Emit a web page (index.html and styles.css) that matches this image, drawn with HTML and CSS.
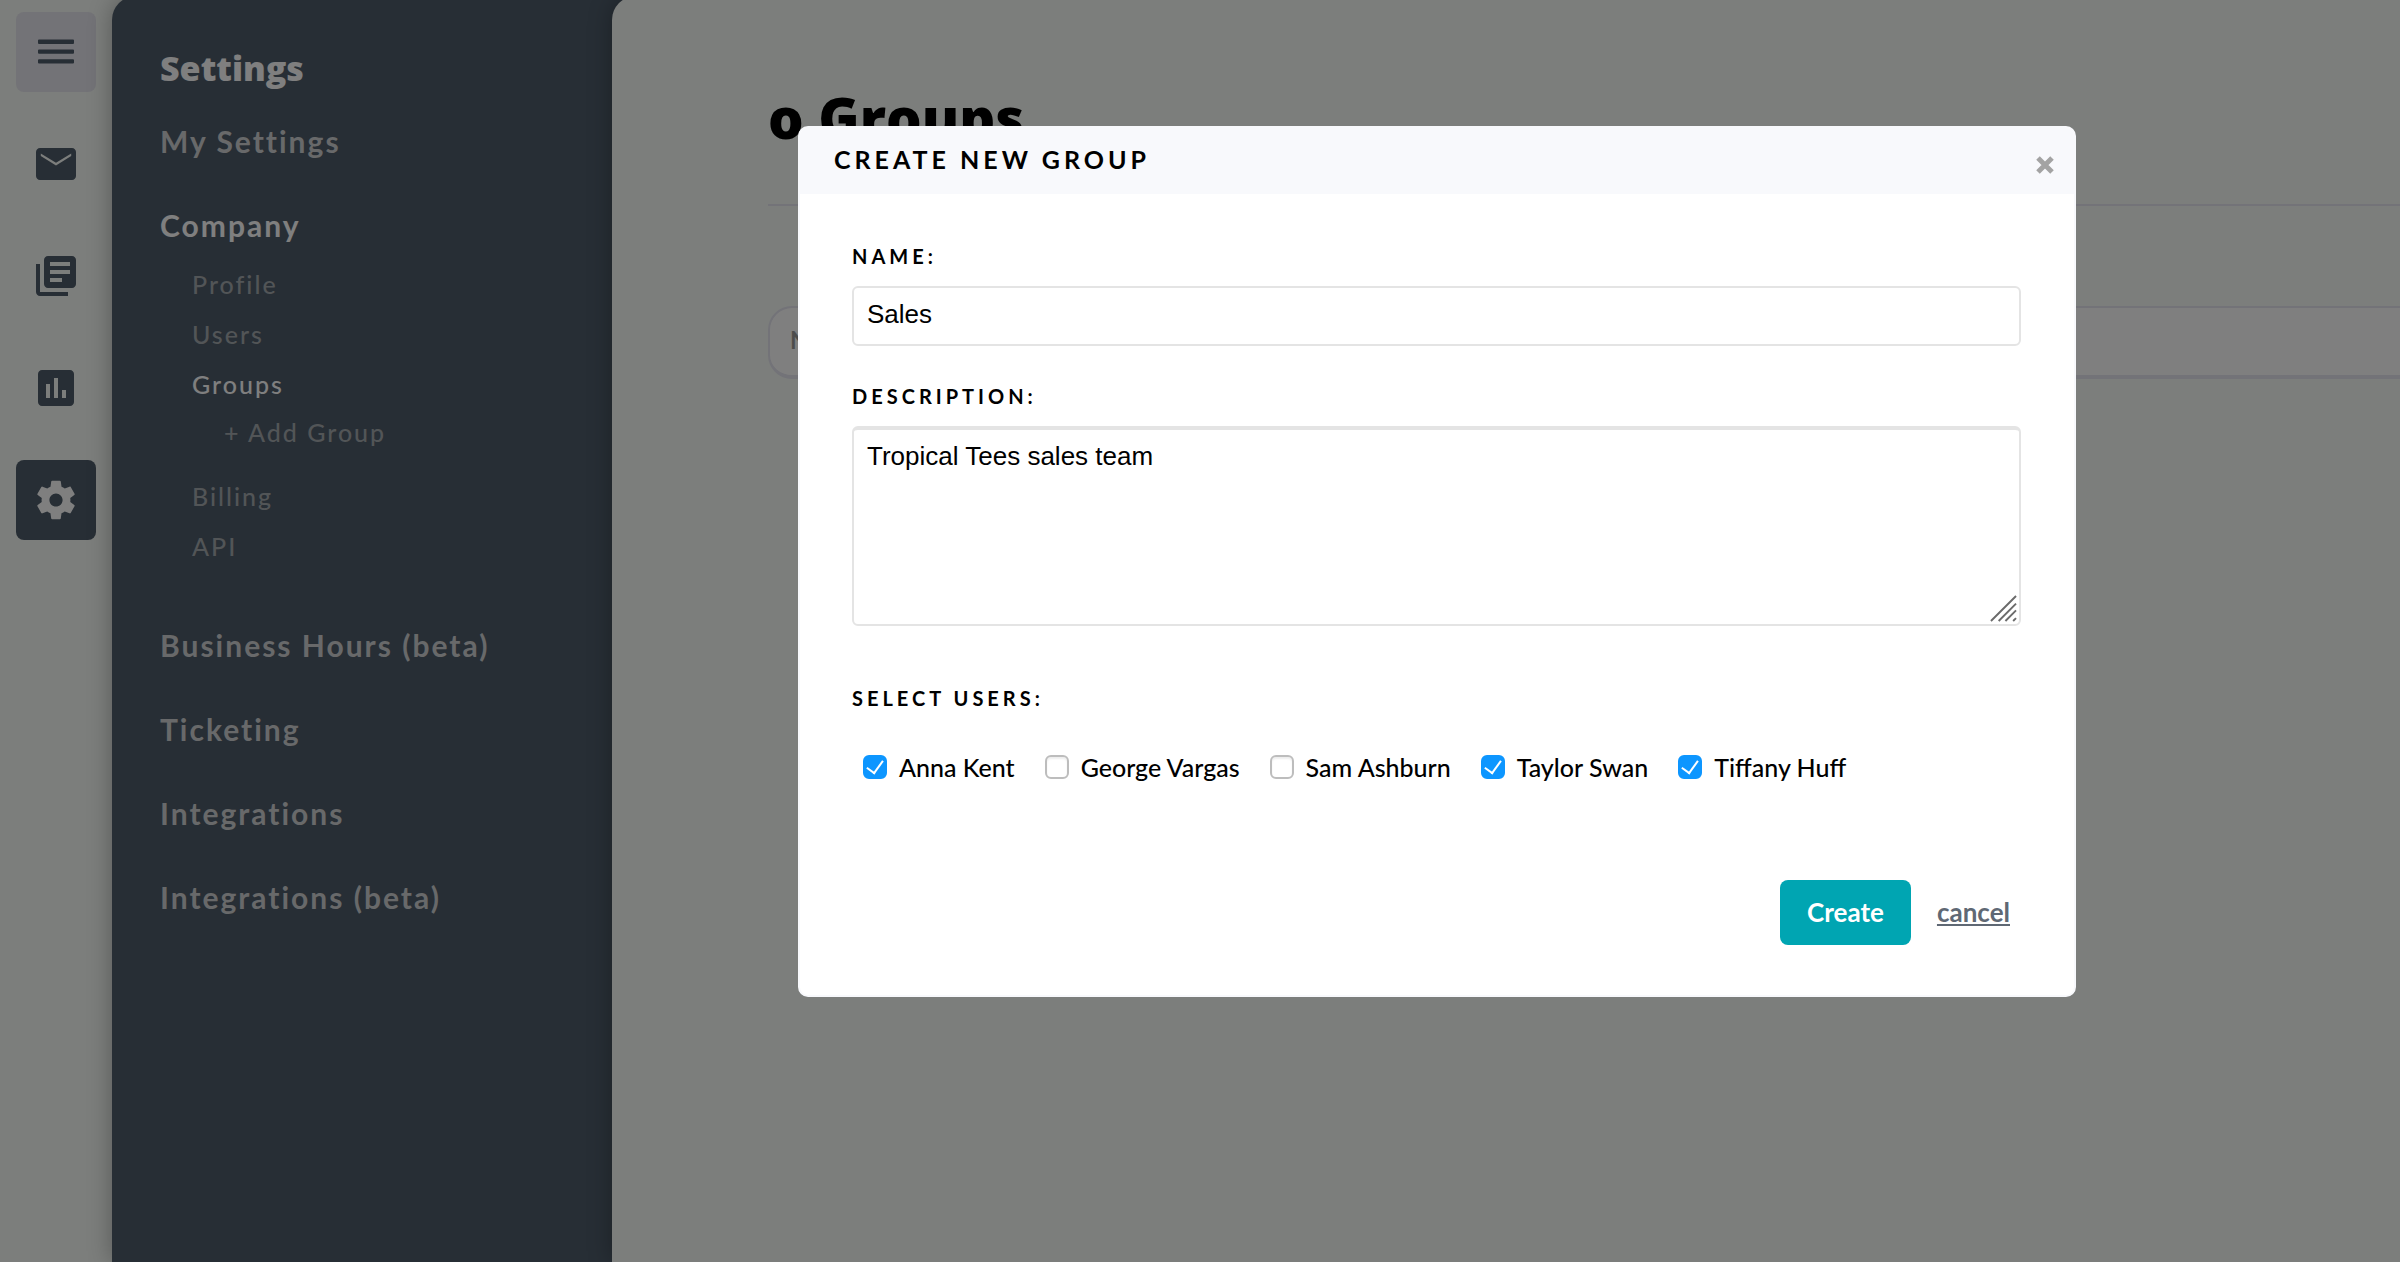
FILE: index.html
```html
<!DOCTYPE html>
<html lang="en">
<head>
    <meta charset="UTF-8">
    <meta name="viewport" content="width=device-width, initial-scale=1.0">
    <title>Groups - Settings</title>
    <link rel="stylesheet" href="styles.css">
</head>
<body>
    <div class="app">
        <div class="rail">
            <button class="rail-button menu" aria-label="Menu">
                <svg viewBox="0 0 24 24"><path d="M3.500 5.800h17q.5 0 .5.500v1.200q0 .5-.5.500h-17q-.5 0-.5-.5v-1.200q0-.5.5-.5zM3.500 10.700h17q.5 0 .5.500v1.200q0 .5-.5.500h-17q-.5 0-.5-.5v-1.200q0-.5.5-.5zM3.500 15.600h17q.5 0 .5.500v1.200q0 .5-.5.500h-17q-.5 0-.5-.5v-1.200q0-.5.5-.5z"/></svg>
            </button>
            <button class="rail-button" aria-label="Mail">
                <svg viewBox="0 0 24 24"><path d="M20 4H4c-1.100 0-2 .9-2 2v12c0 1.100.9 2 2 2h16c1.100 0 2-.9 2-2V6c0-1.100-.9-2-2-2zm-.4 4L12 12.700 4.400 8V6.700L12 11.400l7.600-4.700z"/></svg>
            </button>
            <button class="rail-button" aria-label="Library">
                <svg viewBox="0 0 24 24"><path d="M4 6H2v14c0 1.100.9 2 2 2h14v-2H4V6zm16-4H8c-1.100 0-2 .9-2 2v12c0 1.100.9 2 2 2h12c1.100 0 2-.9 2-2V4c0-1.100-.9-2-2-2zm-1 9H9V9h10v2zm-4 4H9v-2h6v2zm4-8H9V5h10v2z"/></svg>
            </button>
            <button class="rail-button" aria-label="Reports">
                <svg viewBox="0 0 24 24"><path d="M19 3H5c-1.100 0-2 .9-2 2v14c0 1.100.9 2 2 2h14c1.100 0 2-.9 2-2V5c0-1.100-.9-2-2-2zM9 17H7v-7h2v7zm4 0h-2V7h2v10zm4 0h-2v-4h2v4z"/></svg>
            </button>
            <button class="rail-button active" aria-label="Settings">
                <svg viewBox="0 0 24 24"><path d="M19.140 12.940c.04-.3.060-.61.060-.94 0-.32-.02-.64-.07-.94l2.030-1.580c.18-.14.230-.41.120-.61l-1.920-3.320c-.12-.22-.37-.29-.59-.22l-2.390.960c-.5-.38-1.030-.7-1.620-.94l-.36-2.540c-.04-.24-.24-.41-.48-.41h-3.840c-.24 0-.43.170-.47.410l-.36 2.540c-.59.240-1.130.570-1.620.940l-2.390-.96c-.22-.08-.47 0-.59.220L2.740 8.870c-.12.210-.08.470.120.610l2.030 1.580c-.05.300-.09.630-.09.940s.02.640.070.940l-2.030 1.580c-.18.140-.23.410-.12.610l1.920 3.320c.12.220.370.290.590.220l2.390-.96c.5.380 1.030.700 1.620.940l.36 2.540c.05.240.240.410.480.410h3.840c.24 0 .44-.17.470-.41l.36-2.540c.59-.24 1.130-.56 1.620-.94l2.390.960c.22.080.470 0 .59-.22l1.920-3.320c.12-.22.070-.47-.12-.61l-2.010-1.580zM12 15.300c-1.820 0-3.300-1.480-3.300-3.300s1.480-3.300 3.300-3.300 3.300 1.480 3.300 3.300-1.480 3.300-3.300 3.300z"/></svg>
            </button>
        </div>

        <nav class="sidebar">
            <h2>Settings</h2>
            <ul class="sections">
                <li><a href="#">My Settings</a></li>
                <li>
                    <a href="#" class="current">Company</a>
                    <ul class="pages">
                        <li><a href="#">Profile</a></li>
                        <li><a href="#">Users</a></li>
                        <li>
                            <a href="#" class="current">Groups</a>
                            <a href="#" class="add">+ Add Group</a>
                        </li>
                        <li><a href="#">Billing</a></li>
                        <li><a href="#">API</a></li>
                    </ul>
                </li>
                <li><a href="#">Business Hours (beta)</a></li>
                <li><a href="#">Ticketing</a></li>
                <li><a href="#">Integrations</a></li>
                <li><a href="#">Integrations (beta)</a></li>
            </ul>
        </nav>

        <main class="content">
            <h1>o Groups</h1>
            <table class="groups">
                <tr><th>Name</th></tr>
            </table>
        </main>
    </div>

    <div class="overlay">
        <form class="modal" role="dialog" aria-labelledby="modal-title">
            <div class="modal-header">
                <h3 id="modal-title">Create new group</h3>
                <button type="button" class="close" aria-label="Close">
                    <svg viewBox="0 0 18 18"><path d="M2 2l14 14M16 2L2 16"/></svg>
                </button>
            </div>
            <div class="modal-body">
                <label class="caption" for="name">Name:</label>
                <input type="text" id="name" class="field" value="Sales">

                <label class="caption" for="description">Description:</label>
                <div class="textarea-wrap">
                    <textarea id="description" class="field">Tropical Tees sales team</textarea>
                    <svg class="grip" viewBox="0 0 28 28"><path d="M1 27L27 1M9 27L27 9M16 27L27 16M24 27l3-3"/></svg>
                </div>

                <fieldset>
                    <legend class="caption">Select users:</legend>
                    <div class="users">
                        <label><input type="checkbox" checked>Anna Kent</label>
                        <label><input type="checkbox">George Vargas</label>
                        <label><input type="checkbox">Sam Ashburn</label>
                        <label><input type="checkbox" checked>Taylor Swan</label>
                        <label><input type="checkbox" checked>Tiffany Huff</label>
                    </div>
                </fieldset>

                <div class="actions">
                    <button type="submit" class="create">Create</button>
                    <a href="#" class="cancel">cancel</a>
                </div>
            </div>
        </form>
    </div>
</body>
</html>
```

FILE: styles.css
```css
* {
    box-sizing: border-box;
}

body {
    margin: 0;
    font-family: Lato, sans-serif;
    font-size: 24px;
    color: #000;
    background: #f8fcf8;
}

h1, h2, h3, ul, fieldset, legend {
    margin: 0;
    padding: 0;
}

ul {
    list-style: none;
}

a {
    color: inherit;
    text-decoration: none;
}

button {
    border: none;
    cursor: pointer;
    font-family: inherit;
}

.app {
    display: flex;
    min-height: 100vh;
    overflow: hidden;
}

/* icon rail */
.rail {
    display: flex;
    flex-direction: column;
    gap: 32px;
    width: 112px;
    padding: 12px 16px;
}

.rail-button {
    width: 80px;
    height: 80px;
    padding: 16px;
    border-radius: 8px;
    background: none;
}

.rail-button svg {
    display: block;
    width: 48px;
    height: 48px;
    fill: #4e5c6a;
}

.rail-button.menu {
    background: #e6e6ee;
}

.rail-button.active {
    background: #4e5c6a;
}

.rail-button.active svg {
    fill: #fff;
}

/* settings navigation */
.sidebar {
    width: 524px;
    margin-top: -4px;
    margin-right: -24px;
    padding: 50px 24px 48px 48px;
    border-radius: 24px 0 0 0;
    background: #4e5c6a;
    box-shadow: 0 0 24px rgba(0, 0, 0, 0.3);
    color: #fff;
}

.sidebar h2 {
    margin-bottom: 33px;
    font-family: "Open Sans", sans-serif;
    font-size: 34px;
    font-weight: 800;
    line-height: 44px;
}

.sections > li {
    margin-bottom: 48px;
}

.sections > li > a {
    display: block;
    font-size: 30px;
    font-weight: 700;
    line-height: 36px;
    letter-spacing: 2px;
    color: #d0d2d4;
}

.pages {
    padding: 16px 0 8px 32px;
}

.pages a {
    display: block;
    font-size: 25px;
    font-weight: 500;
    line-height: 50px;
    letter-spacing: 2px;
    color: #a4aaae;
}

.pages .add {
    padding: 0 0 16px 32px;
    line-height: 46px;
}

.sections a.current {
    color: #fff;
}

/* page */
.content {
    flex: 1;
    z-index: 1;
    margin-top: -4px;
    padding: 81px 0 0 156px;
    border-radius: 24px 0 0 0;
    background: #f8fcf8;
    box-shadow: 0 0 24px rgba(0, 0, 0, 0.3);
}

.content h1 {
    margin-bottom: 100px;
    padding-bottom: 47px;
    border-bottom: 2px solid #e6e6f0;
    font-family: "Open Sans", sans-serif;
    font-size: 56px;
    font-weight: 800;
    line-height: 80px;
}

.groups {
    width: calc(100% + 24px);
    border: 2px solid #e6e6f0;
    border-bottom-width: 4px;
    border-radius: 24px;
    border-spacing: 0;
    background: #fff;
}

.groups th {
    height: 67px;
    padding: 0 20px 4px;
    font-size: 24px;
    color: #999;
    text-align: left;
}

/* modal */
.overlay {
    position: fixed;
    inset: 0;
    z-index: 2;
    padding: 126px 13.5% 0 33.25%;
    background: rgba(0, 0, 0, 0.5);
}

.modal {
    overflow: hidden;
    border: 2px solid #f8f9fc;
    border-radius: 10px;
    background: #fff;
}

.modal-header {
    display: flex;
    justify-content: space-between;
    padding: 12px 20px 16px 34px;
    background: #f8f9fc;
}

.modal-header h3 {
    font-size: 25px;
    font-weight: 700;
    line-height: 38px;
    letter-spacing: 4px;
    text-transform: uppercase;
}

.close {
    align-self: flex-end;
    padding: 4px 0;
    background: none;
}

.close svg {
    display: block;
    width: 18px;
    height: 18px;
    overflow: visible;
    fill: none;
    stroke: #a3a3a3;
    stroke-width: 5;
}

.modal-body {
    padding: 48px 53px 50px 52px;
}

.caption {
    display: block;
    font-size: 20px;
    font-weight: 700;
    line-height: 28px;
    letter-spacing: 4px;
    text-transform: uppercase;
}

.field {
    display: block;
    width: 100%;
    height: 60px;
    margin: 16px 0 36px;
    padding: 8px 13px 12px;
    border: 2px solid #e4e4e4;
    border-radius: 6px;
    outline: none;
    font-family: "Liberation Sans", Arial, sans-serif;
    font-size: 26px;
    color: #000;
}

.textarea-wrap {
    position: relative;
}

textarea.field {
    height: 200px;
    margin-bottom: 58px;
    border-top-width: 4px;
    line-height: 36px;
    resize: none;
}

.grip {
    position: absolute;
    right: 4px;
    bottom: 4px;
    width: 27px;
    height: 27px;
    fill: none;
    stroke: #6b6b6b;
    stroke-width: 2;
}

fieldset {
    border: none;
}

.users {
    display: flex;
    flex-wrap: wrap;
    gap: 30px;
    padding: 39px 11px 0;
}

.users label {
    display: flex;
    align-items: center;
    gap: 12px;
    font-size: 25px;
    font-weight: 500;
    line-height: 32px;
}

.users input {
    appearance: none;
    width: 24px;
    height: 24px;
    margin: 0;
    border: 2px solid #bdbdbd;
    border-radius: 6px;
    background: #fff;
    box-shadow: inset 0 2px 2px #eee;
}

.users input:checked {
    display: grid;
    place-items: center;
    border-color: #0d96ff;
    background: #0d96ff;
    box-shadow: none;
}

.users input:checked::after {
    content: "";
    width: 8px;
    height: 14px;
    margin-bottom: 4px;
    border: solid #fff;
    border-width: 0 2px 2px 0;
    transform: rotate(36deg);
}

.actions {
    display: flex;
    justify-content: flex-end;
    align-items: center;
    gap: 26px;
    padding: 97px 11px 0 0;
}

.create {
    padding: 0 27px;
    border-radius: 8px;
    background: #00a5b2;
    color: #fff;
    font-size: 26px;
    font-weight: 700;
    line-height: 65px;
}

.cancel {
    color: #5f6874;
    font-size: 26px;
    font-weight: 700;
    line-height: 65px;
    text-decoration: underline;
}
```
